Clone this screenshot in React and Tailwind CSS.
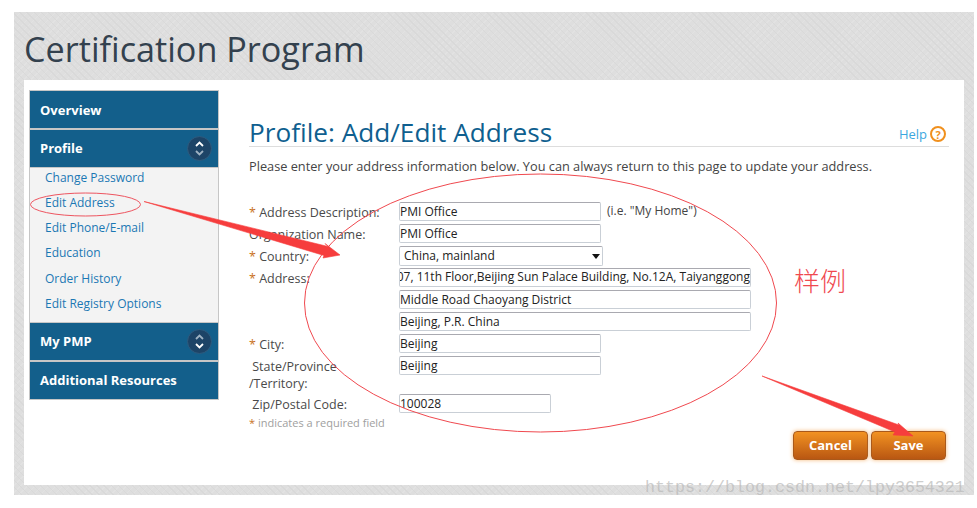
const inputClass =
  "block h-[19px] bg-white border border-[#c9cfd6] border-t-[#a9a9b0] rounded-[2px] text-[12px] text-[#222] outline-none";

function Toggle({ open }) {
  return (
    <span className="w-[25px] h-[25px] rounded-full bg-[#1d4467] border border-[#2d5c80] flex items-center justify-center">
      <svg width="11" height="17" viewBox="0 0 11 17" fill="none" strokeWidth="1.8">
        <path d="M2 6l3.5-3.5L9 6" stroke={open ? "#ffffff" : "#9fb2c2"} />
        <path d="M2 11l3.5 3.5L9 11" stroke={open ? "#9fb2c2" : "#ffffff"} />
      </svg>
    </span>
  );
}

function NavHead({ label, toggle, open, className = "" }) {
  return (
    <div className={`h-[37px] bg-[#135f8b] flex items-center justify-between pl-[10px] pr-[6px] text-[13px] font-bold text-white ${className}`}>
      <span>{label}</span>
      {toggle && <Toggle open={open} />}
    </div>
  );
}

function Sidebar() {
  const links = [
    ["Change Password", "h-[25px]"],
    ["Edit Address", "h-[25px]"],
    ["Edit Phone/E-mail", "h-[25px]"],
    ["Education", "h-[26px]"],
    ["Order History", "h-[25px]"],
    ["Edit Registry Options", "h-[25px]"],
  ];
  return (
    <div className="w-[190px] h-[310px] shrink-0 border border-[#c6c6c6] bg-[#c6c6c6] flex flex-col">
      <NavHead label="Overview" className="pt-[2px]" />
      <div className="h-[2px]" />
      <NavHead label="Profile" toggle open />
      <div className="h-[154px] bg-[#f3f3f3] mt-[1px] mb-[1px] pl-[15px]">
        {links.map(([text, height]) => (
          <div key={text} className={`${height} flex items-center text-[12px] text-[#1b78b4] relative top-[-3px]`}>
            {text}
          </div>
        ))}
      </div>
      <NavHead label="My PMP" toggle />
      <div className="h-[2px]" />
      <NavHead label="Additional Resources" />
    </div>
  );
}

function Row({ label, required, className = "h-[22px]", children }) {
  return (
    <div className={`flex ${className}`}>
      <div className="w-[150px] shrink-0 text-[12.5px] leading-[17px] text-[#4a4a4a] pt-[2px]">
        {required && <span className="text-[#c8701a]">* </span>}
        {label}
      </div>
      <div className="flex items-start">{children}</div>
    </div>
  );
}

function Form() {
  return (
    <div className="mt-[27px]">
      <Row label="Address Description:" required>
        <input readOnly value="PMI Office" className={`${inputClass} w-[202px]`} />
        <span className="ml-[6px] text-[12px] text-[#444]">(i.e. "My Home")</span>
      </Row>
      <Row label="Organization Name:">
        <input readOnly value="PMI Office" className={`${inputClass} w-[202px]`} />
      </Row>
      <Row label="Country:" required>
        <div className="relative w-[204px] h-[20px]">
          <select className="block appearance-none w-full h-full bg-white border border-[#c9cfd6] border-t-[#a9a9b0] rounded-[2px] pl-[4px] text-[12px] text-[#222]">
            <option>China, mainland</option>
          </select>
          <svg className="absolute right-[3px] top-[8px]" width="8" height="5" viewBox="0 0 8 5">
            <path d="M0 0h8L4 5z" fill="#111" />
          </svg>
        </div>
      </Row>
      <Row label="Address:" required>
        <div className="w-[352px] h-[19px] bg-white border border-[#c9cfd6] border-t-[#a9a9b0] rounded-[2px] flex justify-end overflow-hidden whitespace-nowrap text-[12px] leading-[16px] text-[#222]">
          Room 1007, 11th Floor,Beijing Sun Palace Building, No.12A, Taiyanggong
        </div>
      </Row>
      <Row label="">
        <input readOnly value="Middle Road Chaoyang District" className={`${inputClass} w-[352px]`} />
      </Row>
      <Row label="">
        <input readOnly value="Beijing, P.R. China" className={`${inputClass} w-[352px]`} />
      </Row>
      <Row label="City:" required>
        <input readOnly value="Beijing" className={`${inputClass} w-[202px]`} />
      </Row>
      <Row label={<>&nbsp;State/Province<br />/Territory:</>} className="h-[38px]">
        <input readOnly value="Beijing" className={`${inputClass} w-[202px]`} />
      </Row>
      <Row label={<>&nbsp;Zip/Postal Code:</>}>
        <input readOnly value="100028" className={`${inputClass} w-[152px]`} />
      </Row>
      <div className="text-[11px] text-[#a0a0a0] leading-[14px]">
        <span className="text-[#c8701a]">*</span> indicates a required field
      </div>
    </div>
  );
}

function Annotations() {
  return (
    <svg className="absolute left-0 top-0 pointer-events-none" width="977" height="508" viewBox="0 0 977 508" fill="none">
      <ellipse cx="540.5" cy="303" rx="236" ry="129" stroke="#f0494f" strokeWidth="1" />
      <ellipse cx="85.5" cy="204.5" rx="55" ry="11.5" stroke="#ee5560" strokeWidth="1" />
      <polygon points="144,201.5 328,246.5 325,243.5 340,255 323,258 324,255.5" fill="#f63d3d" stroke="#f63d3d" strokeWidth="0.6" />
      <polygon points="762,376 899,425 898,423 913,436 893,435 895,432" fill="#f63d3d" stroke="#f63d3d" strokeWidth="0.6" />
    </svg>
  );
}

export default function App() {
  return (
    <div className="relative w-[977px] h-[508px] bg-white pt-[12px] pl-[14px] overflow-hidden font-['Open_Sans',sans-serif]">
      <div className="w-[960px] h-[483px] px-[10px] bg-[#dedede] bg-[repeating-linear-gradient(45deg,#d9d9d9_0px,#d9d9d9_1px,transparent_1px,transparent_5px),repeating-linear-gradient(-45deg,#e2e2e2_0px,#e2e2e2_1px,transparent_1px,transparent_5px)]">
        <h1 className="h-[68px] pt-[14px] text-[34.2px] leading-[46px] text-[#33414e]">Certification Program</h1>
        <div className="h-[405px] bg-white flex pt-[10px] pl-[5px]">
          <Sidebar />
          <div className="w-[700px] ml-[30px]">
            <div className="h-[57px] border-b border-[#dddddd] flex items-end justify-between">
              <h2 className="text-[26.2px] leading-[34px] relative top-[3px] text-[#0f5f8f]">Profile: Add/Edit Address</h2>
              <div className="flex items-center gap-[3px] text-[13px] text-[#3ba7e0] pb-[2px] mr-[3px]">
                Help
                <span className="w-[16px] h-[16px] rounded-full border-2 border-[#f0901e] flex items-center justify-center text-[11px] font-bold leading-none text-[#f0901e]">?</span>
              </div>
            </div>
            <p className="mt-[10px] text-[12.75px] leading-[18px] text-[#444]">
              Please enter your address information below. You can always return to this page to update your address.
            </p>
            <Form />
            <div className="flex justify-end gap-[3px] mt-[1px] mr-[3px]">
              <button className="w-[75px] h-[29px] rounded-[4px] border border-[#a9591b] bg-gradient-to-b from-[#f29222] to-[#b95712] text-[13px] font-bold text-white shadow-[0_0_4px_#f5b878]">Cancel</button>
              <button className="w-[75px] h-[29px] rounded-[4px] border border-[#a9591b] bg-gradient-to-b from-[#f29222] to-[#b95712] text-[13px] font-bold text-white shadow-[0_0_4px_#f5b878]">Save</button>
            </div>
          </div>
        </div>
      </div>
      <Annotations />
      <div className="absolute left-[794px] top-[262px] text-[26px] leading-[36px] text-[#f0494f] font-['Noto_Sans_CJK_SC',sans-serif] font-light">样例</div>
      <div className="absolute left-[645px] top-[478px] text-[16.67px] leading-[20px] text-[#b8b8b8]/70 font-['Liberation_Mono',monospace]">https://blog.csdn.net/lpy3654321</div>
    </div>
  );
}
